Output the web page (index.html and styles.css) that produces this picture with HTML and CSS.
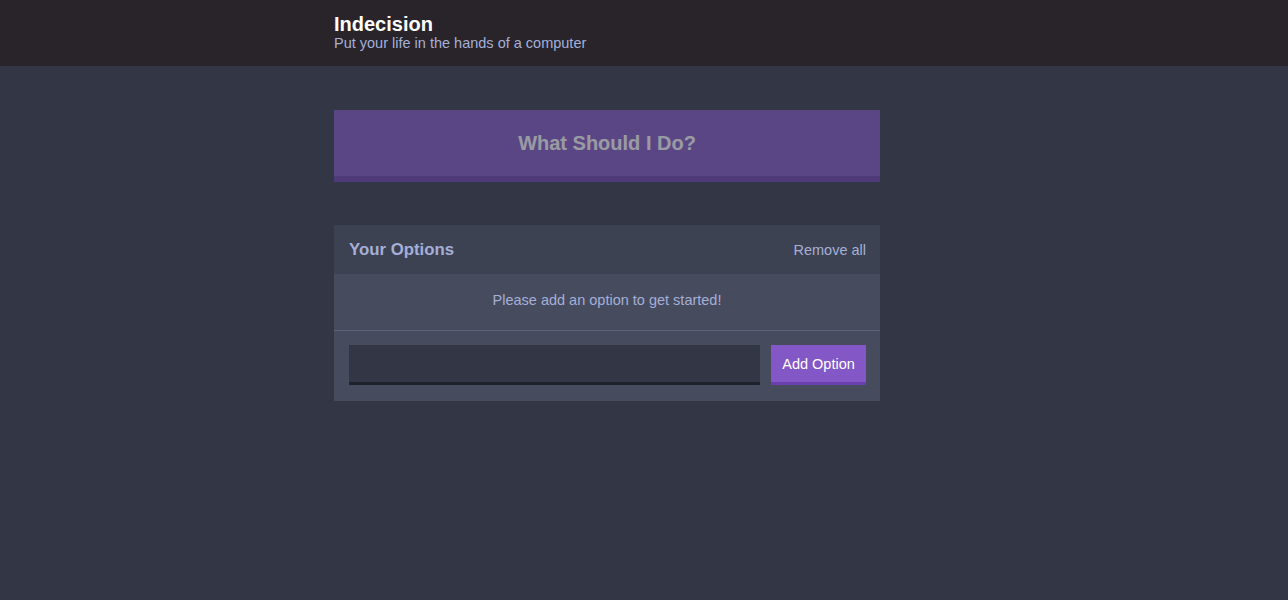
FILE: index.html
```html
<!DOCTYPE html>
<html lang="en">
<head>
<meta charset="utf-8">
<title>Indecision</title>
<link rel="stylesheet" href="styles.css">
</head>
<body>
<header class="header">
  <div class="container">
    <h1 class="header__title">Indecision</h1>
    <h2 class="header__subtitle">Put your life in the hands of a computer</h2>
  </div>
</header>
<main class="container">
  <button class="big-button" disabled>What Should I Do?</button>
  <div class="widget">
    <div class="widget-header">
      <h3 class="widget-header__title">Your Options</h3>
      <button class="button--link">Remove all</button>
    </div>
    <p class="widget__message">Please add an option to get started!</p>
    <form class="add-option">
      <input class="add-option__input" type="text" name="option">
      <button class="button" type="button">Add Option</button>
    </form>
  </div>
</main>
</body>
</html>
```

FILE: styles.css
```css
* { box-sizing: border-box; }
html, body { margin: 0; padding: 0; }
body {
  background: #333645;
  font-family: "Liberation Sans", Arial, sans-serif;
  color: #ffffff;
  min-height: 600px;
}
.container {
  max-width: 620px;
  margin: 0 auto;
}
.header {
  background: #28242a;
  height: 66px;
  padding-top: 12px;
}
.header__title {
  margin: 0;
  font-size: 20px;
  line-height: 24px;
  font-weight: bold;
  color: #ffffff;
}
.header__subtitle {
  margin: 0;
  font-size: 14.5px;
  line-height: 14px;
  font-weight: normal;
  color: #a5afd7;
}
.big-button {
  display: block;
  width: 546px;
  height: 72px;
  margin: 44px 0 43px;
  padding: 0;
  background: #8357c5;
  border: none;
  border-bottom: 6px solid #6b3fae;
  color: #ffffff;
  font-family: inherit;
  font-size: 20px;
  font-weight: bold;
  opacity: 0.5;
}
.widget {
  width: 546px;
  background: #464b5e;
}
.widget-header {
  display: flex;
  justify-content: space-between;
  align-items: center;
  height: 49px;
  padding: 0 14px 0 15px;
  background: #3c4251;
}
.widget-header__title {
  margin: 0;
  font-size: 16.8px;
  font-weight: bold;
  color: #a5afd7;
}
.button--link {
  background: none;
  border: none;
  padding: 0;
  font-family: inherit;
  font-size: 14.5px;
  color: #a5afd7;
}
.widget__message {
  margin: 0;
  height: 57px;
  padding-top: 17px;
  text-align: center;
  font-size: 14.5px;
  line-height: 18px;
  color: #a5afd7;
  border-bottom: 1px solid #5d6278;
}
.add-option {
  display: flex;
  gap: 11px;
  padding: 14px 14px 16px 15px;
}
.add-option__input {
  flex: 1;
  height: 40px;
  background: #333645;
  border: none;
  border-bottom: 3px solid #20222b;
  color: #a5afd7;
  font-family: inherit;
  font-size: 14.5px;
  padding: 0 10px;
  outline: none;
}
.button {
  width: 95px;
  height: 40px;
  padding: 0;
  background: #8357c5;
  border: none;
  border-bottom: 3px solid #6b3fae;
  color: #ffffff;
  font-family: inherit;
  font-size: 14.5px;
}
```
